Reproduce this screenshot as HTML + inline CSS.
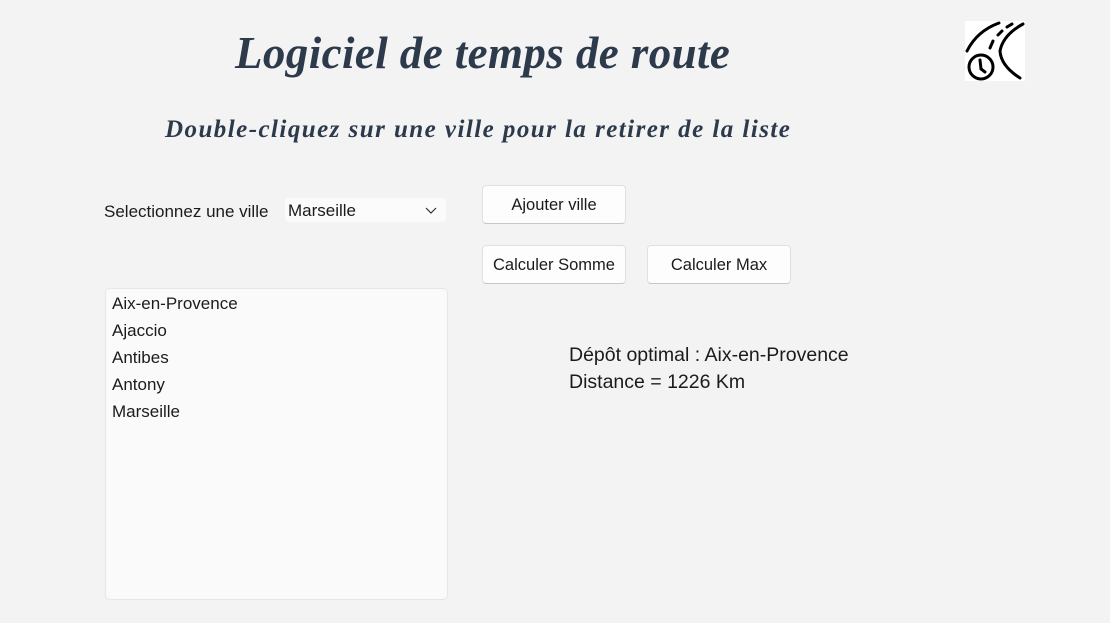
<!DOCTYPE html>
<html><head><meta charset="utf-8"><style>
body{margin:0;width:1110px;height:623px;background:#f3f3f3;font-family:"Liberation Sans",sans-serif;position:relative;overflow:hidden;color:#1b1b1b}
.abs{position:absolute}
.title{left:235px;top:27px;font:italic bold 45px "Liberation Serif",serif;color:#2c3a4b;white-space:nowrap;letter-spacing:0.4px}
.sub{left:165px;top:116px;font:italic bold 25px "Liberation Serif",serif;color:#2c3a4b;white-space:nowrap;letter-spacing:1.45px}
.btn{background:#fdfdfd;border:1px solid #e0e0e0;border-bottom-color:#c8c8c8;border-radius:4px;font-size:16.5px;text-align:center;box-sizing:border-box;line-height:38px}
.lbl{font-size:17px}
</style></head><body>
<div class="abs title">Logiciel de temps de route</div>
<div class="abs sub">Double-cliquez sur une ville pour la retirer de la liste</div>
<svg class="abs" style="left:965px;top:21px" width="60" height="60" viewBox="0 0 60 60">
<rect width="60" height="60" fill="#fff"/>
<g fill="none" stroke="#000" stroke-width="3" stroke-linecap="round">
<path d="M2 30 Q12 10 34 2"/>
<path d="M58 3 Q38 14 35 30 Q36 45 55 57"/>
<path d="M47 3 L42 6 M37 10 L33 14 M28 20 L25 27"/>
<circle cx="16" cy="46" r="12"/>
<path d="M15 39 L16 48 L20 51"/>
</g></svg>
<div class="abs lbl" style="left:104px;top:202px">Selectionnez une ville</div>
<div class="abs" style="left:285px;top:198px;width:161px;height:24px;background:#fbfbfb;border-radius:4px;font-size:17px;line-height:25px;padding-left:3px;box-sizing:border-box">Marseille
<svg class="abs" style="left:140px;top:9px" width="12" height="8"><path d="M1 1 L6 6 L11 1" fill="none" stroke="#333" stroke-width="1.2"/></svg></div>
<div class="abs btn" style="left:482px;top:185px;width:144px;height:39px">Ajouter ville</div>
<div class="abs btn" style="left:482px;top:245px;width:144px;height:39px">Calculer Somme</div>
<div class="abs btn" style="left:647px;top:245px;width:144px;height:39px">Calculer Max</div>
<div class="abs" style="left:105px;top:288px;width:343px;height:312px;background:#fafafa;border:1px solid #e6e6e6;border-radius:5px;box-sizing:border-box;padding:1px 0 0 6px;font-size:17px;line-height:27px">Aix-en-Provence<br>Ajaccio<br>Antibes<br>Antony<br>Marseille</div>
<div class="abs" style="left:569px;top:342px;font-size:19.5px;line-height:27px">Dépôt optimal : Aix-en-Provence<br>Distance = 1226 Km</div>
</body></html>
